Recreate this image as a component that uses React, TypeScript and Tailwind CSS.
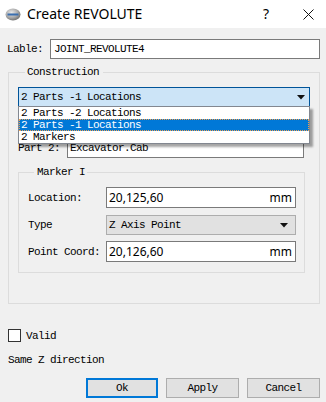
export default function App() {
  const mono = "font-['Liberation_Mono','DejaVu_Sans_Mono',monospace] text-[11px] leading-[12px] tracking-[-0.6px]"
  const sans = "font-['Noto_Sans','Liberation_Sans',sans-serif] text-[12px] tracking-normal"

  return (
    <div className={`w-[326px] h-[402px] overflow-hidden bg-[#f0f0f0] text-black ${mono}`}>
      {/* title bar */}
      <div className="h-[28px] bg-white flex items-center">
        <svg className="ml-[5px]" width="16" height="13" viewBox="0 0 16 13">
          <defs>
            <radialGradient id="ball" cx="0.4" cy="0.35" r="0.7">
              <stop offset="0" stopColor="#e8e8e8" />
              <stop offset="0.6" stopColor="#a8a8a8" />
              <stop offset="1" stopColor="#6a6a6a" />
            </radialGradient>
          </defs>
          <ellipse cx="8" cy="6.5" rx="7.5" ry="6" fill="url(#ball)" />
          <rect x="2.5" y="5.5" width="11" height="2" fill="#3a6fb0" />
        </svg>
        <span className="ml-[6px] font-['Noto_Sans','Liberation_Sans',sans-serif] text-[14px] leading-[20px] tracking-normal">
          Create REVOLUTE
        </span>
        <span className="ml-auto mr-[34px] font-['Noto_Sans',sans-serif] text-[14px] tracking-normal">?</span>
        <svg className="mr-[12px]" width="11" height="11" viewBox="0 0 11 11">
          <path d="M0.5 0.5 L10.5 10.5 M10.5 0.5 L0.5 10.5" stroke="#111" strokeWidth="1" />
        </svg>
      </div>

      {/* Lable */}
      <div className="mt-[11px] h-[20px] flex items-center">
        <span className="pl-[7px] w-[50px]">Lable:</span>
        <div className="w-[270px] h-[20px] border border-[#7a7a7a] bg-white flex items-center pl-[3px]">
          JOINT_REVOLUTE4
        </div>
      </div>

      {/* Construction */}
      <fieldset className="mt-[7px] ml-[8px] w-[312px] border border-[#dcdcdc] px-[9px] pb-[30px]">
        <legend className="ml-[7px] pl-[2px] pr-[4px]">Construction</legend>

        <div className="relative mt-[9px]">
          <div className="h-[20px] border border-[#005499] bg-[#cce4f7] flex items-center justify-between pl-[2px] pr-[4px]">
            <span>2 Parts -1 Locations</span>
            <svg width="8" height="5" viewBox="0 0 8 5">
              <path d="M0 0 H8 L4 4.5 Z" fill="#111" />
            </svg>
          </div>

          {/* open dropdown list, covers the Part 1 row */}
          <div className="absolute z-10 left-0 top-[19px] w-full border border-[#828790] bg-white shadow-[3px_3px_2px_rgba(0,0,0,0.35)]">
            <div className="h-[12px] pl-[2px]">2 Parts -2 Locations</div>
            <div className="h-[12px] pl-[2px] bg-[#0078d7] text-white outline outline-1 outline-dotted outline-[#f0a050] -outline-offset-1">
              2 Parts -1 Locations
            </div>
            <div className="h-[12px] pl-[2px]">2 Markers</div>
          </div>

          <div className="mt-[5px] h-[20px] flex items-center">
            <span className="w-[49px]" />
            <div className="w-[237px] h-[20px] border border-[#7a7a7a] bg-white" />
          </div>
          <div className="mt-[6px] h-[20px] flex items-center">
            <span className="w-[49px]">Part 2:</span>
            <div className="w-[237px] h-[20px] border border-[#7a7a7a] bg-white flex items-center pl-[2px]">
              Excavator.Cab
            </div>
          </div>
        </div>

        {/* Marker I */}
        <fieldset className="mt-[8px] w-[287px] border border-[#dcdcdc] pl-[9px] pb-[10px]">
          <legend className="ml-[6px] pl-[3px] pr-[2px]">Marker I</legend>

          <div className="mt-[9px] h-[21px] flex items-center">
            <span className="w-[78px]">Location:</span>
            <div className="w-[190px] h-[21px] border border-[#7a7a7a] bg-white flex items-center justify-between pl-[2px] pr-[3px]">
              <span className={sans}>20,125,60</span>
              <span className={`${sans} text-[10px]`}>mm</span>
            </div>
          </div>
          <div className="mt-[7px] h-[20px] flex items-center">
            <span className="w-[78px]">Type</span>
            <div className="w-[190px] h-[20px] border border-[#adadad] bg-[#e1e1e1] flex items-center justify-between pl-[2px] pr-[7px]">
              <span>Z Axis Point</span>
              <svg width="8" height="5" viewBox="0 0 8 5">
                <path d="M0 0 H8 L4 4.5 Z" fill="#111" />
              </svg>
            </div>
          </div>
          <div className="mt-[6px] h-[21px] flex items-center">
            <span className="w-[78px]">Point Coord:</span>
            <div className="w-[190px] h-[21px] border border-[#7a7a7a] bg-white flex items-center justify-between pl-[2px] pr-[3px]">
              <span className={sans}>20,126,60</span>
              <span className={`${sans} text-[10px]`}>mm</span>
            </div>
          </div>
        </fieldset>
      </fieldset>

      {/* Valid */}
      <div className="mt-[25px] ml-[8px] flex items-center">
        <div className="w-[13px] h-[13px] border border-[#333] bg-white" />
        <span className="ml-[5px]">Valid</span>
      </div>

      <div className="mt-[12px] ml-[8px]">Same Z direction</div>

      {/* buttons */}
      <div className="mt-[12px] flex justify-end gap-[8px] pr-[6px]">
        <button className="w-[72px] h-[20px] border-2 border-[#0078d7] bg-[#e1e1e1] flex items-center justify-center">
          Ok
        </button>
        <button className="w-[73px] h-[20px] border border-[#adadad] bg-[#e1e1e1] flex items-center justify-center">
          Apply
        </button>
        <button className="w-[73px] h-[20px] border border-[#adadad] bg-[#e1e1e1] flex items-center justify-center">
          Cancel
        </button>
      </div>
    </div>
  )
}
